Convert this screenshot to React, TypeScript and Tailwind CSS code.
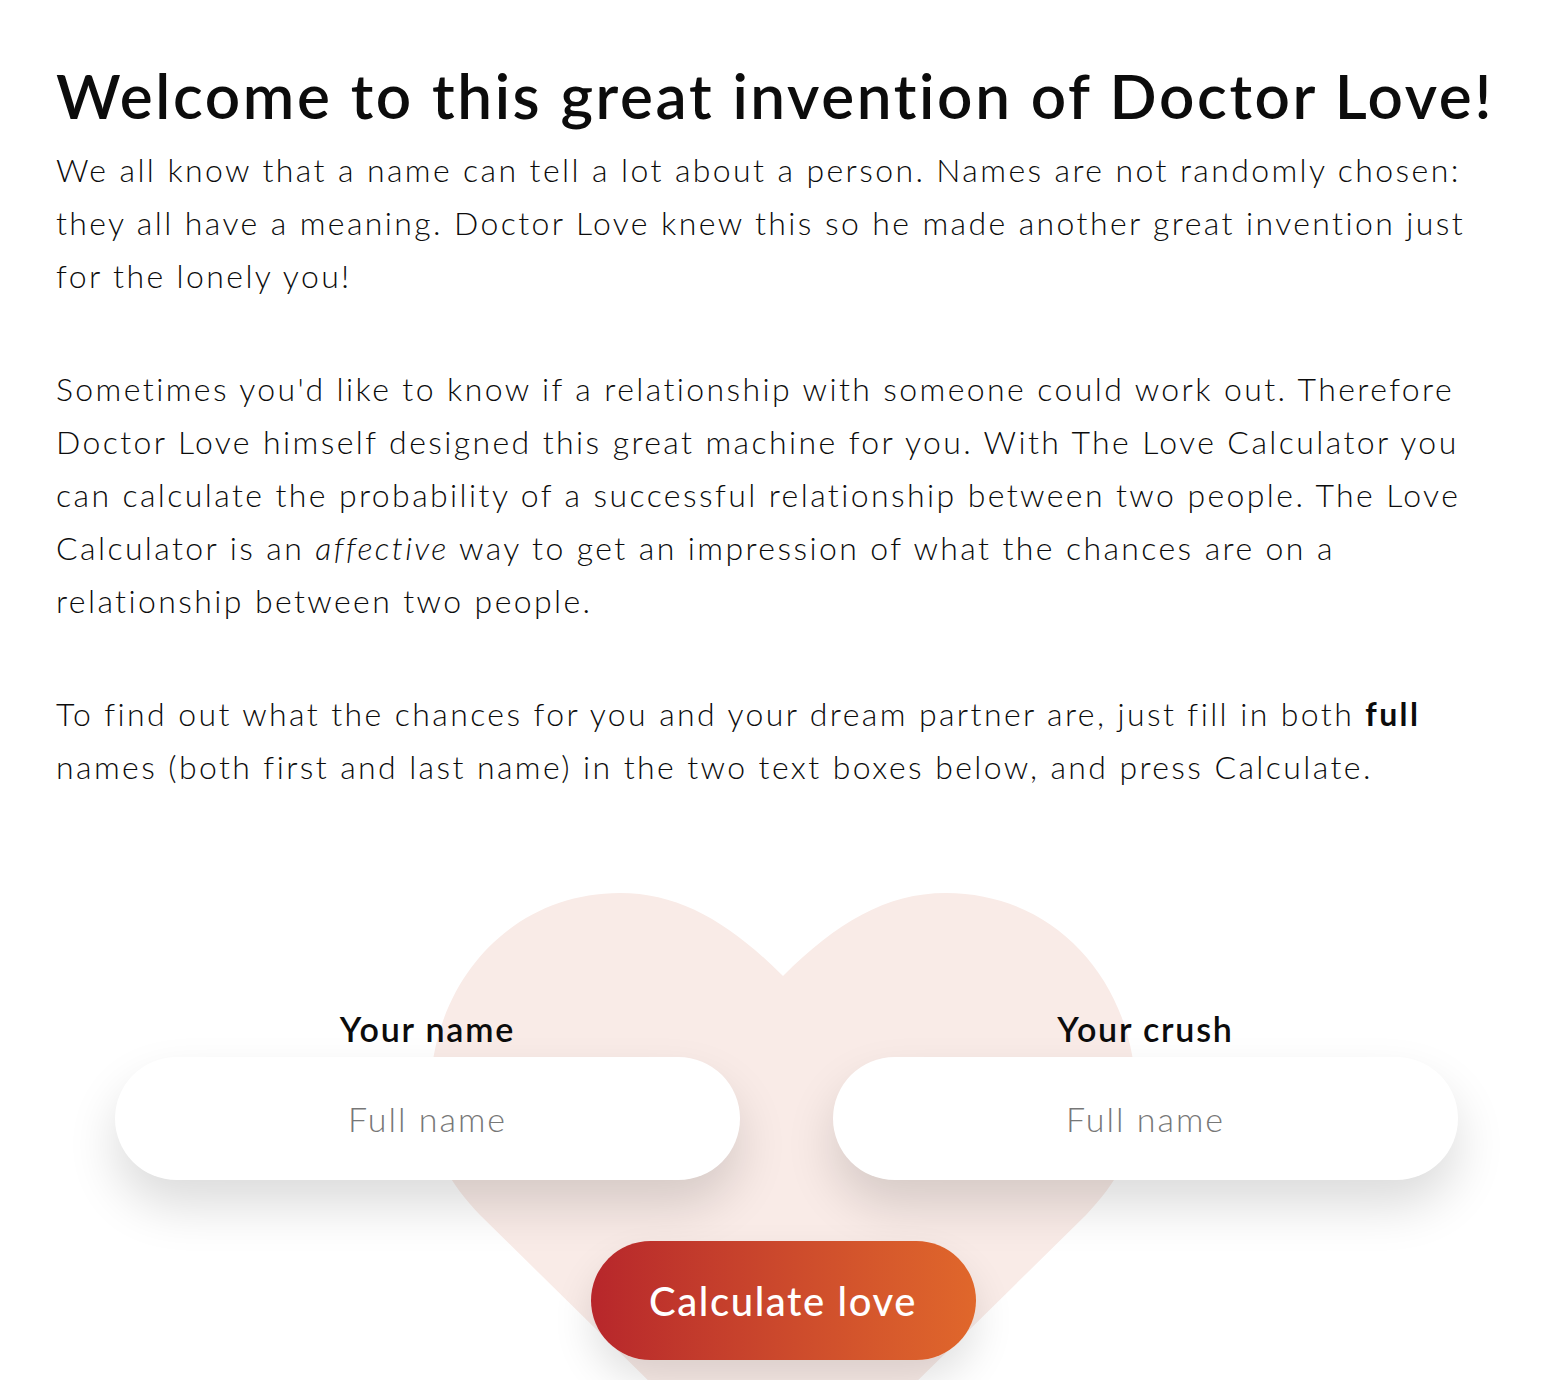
export default function App() {
  return (
    <div className="min-h-screen bg-white text-[#0c0c0c] overflow-hidden" style={{ fontFamily: "Lato, 'Noto Sans', sans-serif" }}>
      <div className="px-14 pt-[47px]">
        <h1 className="text-[62px] leading-[96px] font-semibold tracking-[2.65px] whitespace-nowrap">
          Welcome to this great invention of Doctor Love!
        </h1>
        <div className="text-[32px] leading-[53px] font-light tracking-[2.4px] space-y-[60px]">
          <p>
            We all know that a name can tell a lot about a person. Names are not randomly chosen: they all have a
            meaning. Doctor Love knew this so he made another great invention just for the lonely you!
          </p>
          <p>
            Sometimes you'd like to know if a relationship with someone could work out. Therefore Doctor Love himself
            designed this great machine for you. With The Love Calculator you can calculate the probability of a
            successful relationship between two people. The Love Calculator is an <em>affective</em> way to get an
            impression of what the chances are on a relationship between two people.
          </p>
          <p>
            To find out what the chances for you and your dream partner are, just fill in both{" "}
            <strong className="font-bold">full</strong> names (both first and last name) in the two text boxes below,
            and press Calculate.
          </p>
        </div>
      </div>

      {/* Form with heart behind */}
      <div className="relative mt-[100px] pt-[116px]">
        <svg
          className="absolute left-[430px] top-0"
          width="706"
          height="640"
          viewBox="0 0 706 640"
        >
          <path
            d="M353 83 C 300 30, 250 0, 190 0 C 80 0, 0 90, 0 205 C 0 260, 20 290, 50 322 L 353 620 L 656 322 C 686 290, 706 260, 706 205 C 706 90, 626 0, 516 0 C 456 0, 406 30, 353 83 Z"
            fill="#f9ebe7"
          />
        </svg>

        <div className="relative ml-[115px] w-[1343px] grid grid-cols-2 gap-[93px]">
          {["Your name", "Your crush"].map((label) => (
            <div key={label} className="flex flex-col items-center">
              <label className="text-[34px] leading-[40px] font-semibold tracking-[1.8px] mb-[8px]">{label}</label>
              <input
                placeholder="Full name"
                className="w-full h-[123px] rounded-full bg-white text-center text-[34px] font-light tracking-[2px] placeholder:text-[#777] outline-none shadow-[0_26px_50px_rgba(0,0,0,0.14)]"
              />
            </div>
          ))}
        </div>

        <div className="relative flex justify-center mt-[61px] pl-[20px]">
          <button className="w-[385px] h-[119px] rounded-full bg-gradient-to-r from-[#b7262b] to-[#e0672b] text-white text-[40px] font-medium tracking-[1.6px] shadow-[0_20px_40px_rgba(0,0,0,0.12)]">
            Calculate love
          </button>
        </div>
        <div className="h-20" />
      </div>
    </div>
  );
}
